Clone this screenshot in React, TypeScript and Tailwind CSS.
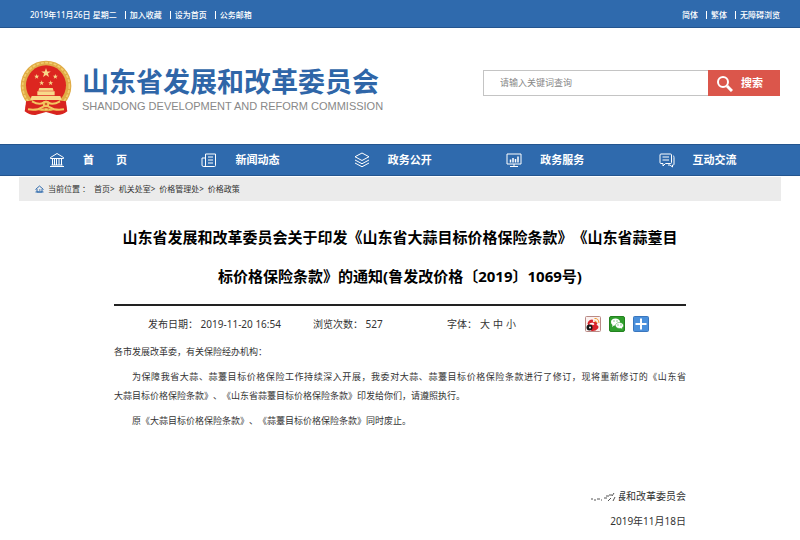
import type { ReactNode } from 'react';

const navIcon = {
  width: 16,
  height: 16,
  viewBox: '0 0 32 32',
  fill: 'none',
  stroke: 'currentColor',
  strokeWidth: 2,
  'aria-hidden': true,
};

const NAV: { label: ReactNode; name: string; icon: ReactNode }[] = [
  {
    name: '首页',
    label: (
      <span className="flex w-11 justify-between">
        <span>首</span>
        <span>页</span>
      </span>
    ),
    icon: (
      <svg {...navIcon}>
        <path d="M3 11 16 3l13 8v2H3zM7 14v12M11 14v12M15 14v12M20 14v12M25 14v12M5 26h22M2 29h28" />
      </svg>
    ),
  },
  {
    name: '新闻动态',
    label: '新闻动态',
    icon: (
      <svg {...navIcon}>
        <path d="M9 27V4h20v23a2 2 0 0 1-2 2H5a3 3 0 0 1-3-3V12h7M9 26a3 3 0 0 1-4 3M14 10h10M14 16h10M14 22h10" />
      </svg>
    ),
  },
  {
    name: '政务公开',
    label: '政务公开',
    icon: (
      <svg {...navIcon}>
        <path d="M16 2 30 9.500 16 17 2 9.500zM2 16l14 7.500L30 16M2 22l14 7.500L30 22" />
      </svg>
    ),
  },
  {
    name: '政务服务',
    label: '政务服务',
    icon: (
      <svg {...navIcon}>
        <path d="M2 4h28v20H2zM16 24v5M8 29h16" />
        <path strokeWidth="3" d="M9 15v6M14 12v9M19 14v7M24 9v12" />
      </svg>
    ),
  },
  {
    name: '互动交流',
    label: '互动交流',
    icon: (
      <svg {...navIcon}>
        <path d="M4 4h19a2 2 0 0 1 2 2v15a2 2 0 0 1-2 2H13l-5 5v-5H4a2 2 0 0 1-2-2V6a2 2 0 0 1 2-2zM7 10h13M7 16h13M28 8c2 0 2 1 2 3v13c0 2-1 2-3 2v4l-5-4h-4" />
      </svg>
    ),
  },
];

const CRUMBS = ['首页', '机关处室', '价格管理处', '价格政策'];

const STAR = 'M0-10 2.400-3.200 9.500-3.100 3.800 1.200 5.900 8.100 0 4-5.900 8.100-3.800 1.200-9.500-3.100-2.400-3.200z';

function Emblem() {
  return (
    <svg width="52" height="56" viewBox="0 0 156 168" aria-hidden="true">
      <path fill="#d8241f" d="M22 112 14 154q14 12 32 11l32-9 32 9q20 0 32-11l-8-42z" />
      <circle cx="78" cy="78" r="76" fill="#e0ab45" />
      <circle cx="78" cy="78" r="70" fill="none" stroke="#f2cc6c" strokeWidth="5" strokeDasharray="9 4" />
      <circle cx="78" cy="76" r="60" fill="#dc2620" />
      <g fill="#f8d98a">
        <path transform="translate(78 39) scale(1.500)" d={STAR} />
        <path transform="translate(50 50) scale(.8)" d={STAR} />
        <path transform="translate(106 50) scale(.8)" d={STAR} />
        <path transform="translate(65 69) scale(.8)" d={STAR} />
        <path transform="translate(92 69) scale(.8)" d={STAR} />
        <path d="M58 84h40l3 8H55zM52 94h52v12H52zM35 108h86l4 12H31z" />
      </g>
      <path fill="#d8241f" d="M18 124q32-6 60 10 28-16 60-10l2 22q-32 4-62-2-30 6-62 2z" />
      <path fill="none" stroke="#f3c660" strokeWidth="6" d="M36 124q22 12 34 4 8-6 16 0 12 8 34-4M24 148q28 4 42-6 12-8 24 0 14 10 42 6" />
      <circle cx="78" cy="132" r="10" fill="#f3c660" />
      <circle cx="78" cy="132" r="4" fill="#d8602a" />
    </svg>
  );
}

function TopLink({ children }: { children: ReactNode }) {
  return (
    <a href="#" className="border-l border-white pl-1 leading-2">
      {children}
    </a>
  );
}

export default function App() {
  return (
    <div
      className="min-h-screen bg-white pb-1 font-['Noto_Sans','Noto_Sans_CJK_SC',sans-serif] text-[#333] [text-spacing-trim:space-all]"
      lang="zh-CN"
    >
      {/* Top bar */}
      <div className="flex h-7 items-center justify-between border-b border-[#24558f] bg-[#2f6aad] pt-0.5 pr-5 pl-[30px] text-[8px] font-medium whitespace-nowrap text-white">
        <div className="flex items-center gap-2">
          <span>2019年11月26日 星期二</span>
          <TopLink>加入收藏</TopLink>
          <TopLink>设为首页</TopLink>
          <TopLink>公务邮箱</TopLink>
        </div>
        <div className="flex items-center gap-2">
          <a href="#">简体</a>
          <TopLink>繁体</TopLink>
          <TopLink>无障碍浏览</TopLink>
        </div>
      </div>

      {/* Logo and search */}
      <header className="flex items-center justify-between px-5 pt-8 pb-7">
        <a href="#" className="flex items-center gap-[10px]">
          <Emblem />
          <span className="flex flex-col pt-1 whitespace-nowrap">
            <span className="text-[27px] leading-8 font-bold text-[#2f66a8]">山东省发展和改革委员会</span>
            <span className="font-['Liberation_Sans',sans-serif] text-[11px] leading-4 text-[#888]">
              SHANDONG DEVELOPMENT AND REFORM COMMISSION
            </span>
          </span>
        </a>
        <form className="mb-[10px] flex h-[26px] w-[297px]">
          <input
            type="text"
            aria-label="关键词"
            placeholder="请输入关键词查询"
            className="min-w-0 flex-1 border border-r-0 border-[#c4c4c4] px-4 text-[9px] placeholder:text-[#888]"
          />
          <button type="button" className="flex w-18 items-center gap-2 bg-[#db564b] pl-2 text-[11px] font-bold text-white">
            <svg width="17" height="17" viewBox="0 0 17 17" fill="none" stroke="currentColor" aria-hidden="true">
              <circle cx="7" cy="7" r="5" strokeWidth="2" />
              <path strokeWidth="3" d="m11 11 5 5" />
            </svg>
            搜索
          </button>
        </form>
      </header>

      {/* Main nav */}
      <nav className="border-y border-[#24558f] bg-[#2f6aad] px-[19px]">
        <ul className="grid h-[30px] grid-cols-5">
          {NAV.map((item) => (
            <li key={item.name} className="flex items-center pl-[30px]">
              <a href="#" className="flex items-center gap-[18px] text-[11px] font-bold whitespace-nowrap text-white">
                {item.icon}
                {item.label}
              </a>
            </li>
          ))}
        </ul>
      </nav>

      {/* Breadcrumb */}
      <div className="mx-[19px] mt-px flex h-6 items-center gap-1 bg-[#ebebeb] pl-4 text-[8px] whitespace-nowrap">
        <svg width="9" height="8" viewBox="0 0 18 16" fill="none" stroke="#2f6aad" strokeWidth="2" aria-hidden="true">
          <path d="M1 9 9 2l8 7M4 8v6h10V8M1 14h16M8 10h3" />
        </svg>
        <span>当前位置 ：</span>
        {CRUMBS.map((crumb, i) => (
          <span key={crumb}>
            <a href="#">{crumb}</a>
            {i < CRUMBS.length - 1 && '>'}
          </span>
        ))}
      </div>

      {/* Article */}
      <main className="px-[114px] pt-[17px]">
        <h1 className="border-b-2 border-[#222] pb-2 text-center text-[15px] leading-[39px] font-bold whitespace-nowrap text-black">
          山东省发展和改革委员会关于印发《山东省大蒜目标价格保险条款》《山东省蒜薹目
          <br />
          标价格保险条款》的通知(鲁发改价格〔2019〕1069号)
        </h1>

        <div className="grid h-9 grid-cols-[165fr_134fr_138fr_101fr] items-center pl-[34px] text-[10px] whitespace-nowrap">
          <span>发布日期： 2019-11-20 16:54</span>
          <span>浏览次数： 527</span>
          <span className="flex gap-[3px]">
            字体：
            <a href="#">大</a>
            <a href="#">中</a>
            <a href="#">小</a>
          </span>
          <span className="flex gap-2">
            <a href="#" aria-label="分享到微博">
              <svg width="16" height="16" viewBox="0 0 32 32">
                <rect x="1" y="1" width="30" height="30" rx="2" fill="#fbf1ef" stroke="#b98a86" strokeWidth="2" />
                <path fill="#d8222a" d="M5 15Q7 7 15 7q3 3 0 6 8-3 10 1l-2 4q6 2 3 7-5 6-13 5l-4-5z" />
                <path fill="#fff" d="M9 15q6-3 10 1l-2 2q-5-2-8 0z" />
                <circle cx="9" cy="23" r="6" fill="#151515" />
                <circle cx="10" cy="23" r="2" fill="#fff" />
                <path fill="none" stroke="#f09a2c" strokeWidth="2" d="M19 5q8-1 9 9M19 10q4 0 4 4" />
              </svg>
            </a>
            <a href="#" aria-label="分享到微信">
              <svg width="16" height="16" viewBox="0 0 32 32">
                <rect x="1" y="1" width="30" height="30" rx="3" fill="#2f9e2c" stroke="#23821f" strokeWidth="2" />
                <path fill="#fff" d="M13 5c-6 0-9 3-9 7q0 4 3 6l-1 4 4-3h4c4 0 8-3 8-7s-4-7-9-7z" />
                <path fill="#fff" stroke="#2f9e2c" d="M21 13c-5 0-8 3-8 6s3 6 8 6h3l3 2-1-3q3-2 3-5c0-3-3-6-8-6z" />
                <path stroke="#2f9e2c" strokeWidth="2" d="M9 10h2M15 10h2M17 18h2M23 18h2" />
              </svg>
            </a>
            <a href="#" aria-label="更多分享">
              <svg width="16" height="16" viewBox="0 0 32 32">
                <rect x="1" y="1" width="30" height="30" rx="2" fill="#4a90dc" stroke="#3a76bd" strokeWidth="2" />
                <path stroke="#fff" strokeWidth="4" d="M16 5v22M5 16h22" />
              </svg>
            </a>
          </span>
        </div>

        <div className="text-[9px] leading-[19px]">
          <p>各市发展改革委，有关保险经办机构：</p>
          <p className="mt-1.5 indent-[18px] text-justify">
            为保障我省大蒜、蒜薹目标价格保险工作持续深入开展，我委对大蒜、蒜薹目标价格保险条款进行了修订，现将重新修订的《山东省
            <span className="whitespace-nowrap">大蒜目标价格保险条款》</span>、《山东省蒜薹目标价格保险条款》印发给你们，请遵照执行。
          </p>
          <p className="mt-1.5 indent-[18px]">原《大蒜目标价格保险条款》、《蒜薹目标价格保险条款》同时废止。</p>
        </div>

        <div className="mt-[57px] flex flex-col items-end gap-1.5 text-[10px] leading-[19px]">
          <p className="relative flex items-center">
            <svg width="28" height="12" viewBox="0 0 28 12" aria-hidden="true">
              <path
                fill="none"
                stroke="#555"
                d="M3 8h2M6 9h2M9 8h3M13 9h1M16 7h3M18 5h3M21 4h3M20 10l3-3M24 5l2-3M25 10l2-4"
              />
            </svg>
            展和改革委员会
            <svg className="absolute left-7" width="8" height="14" viewBox="0 0 8 14" aria-hidden="true">
              <path fill="#fff" d="M0 0h5L1 14H0z" />
            </svg>
          </p>
          <p>2019年11月18日</p>
        </div>
      </main>
    </div>
  );
}
